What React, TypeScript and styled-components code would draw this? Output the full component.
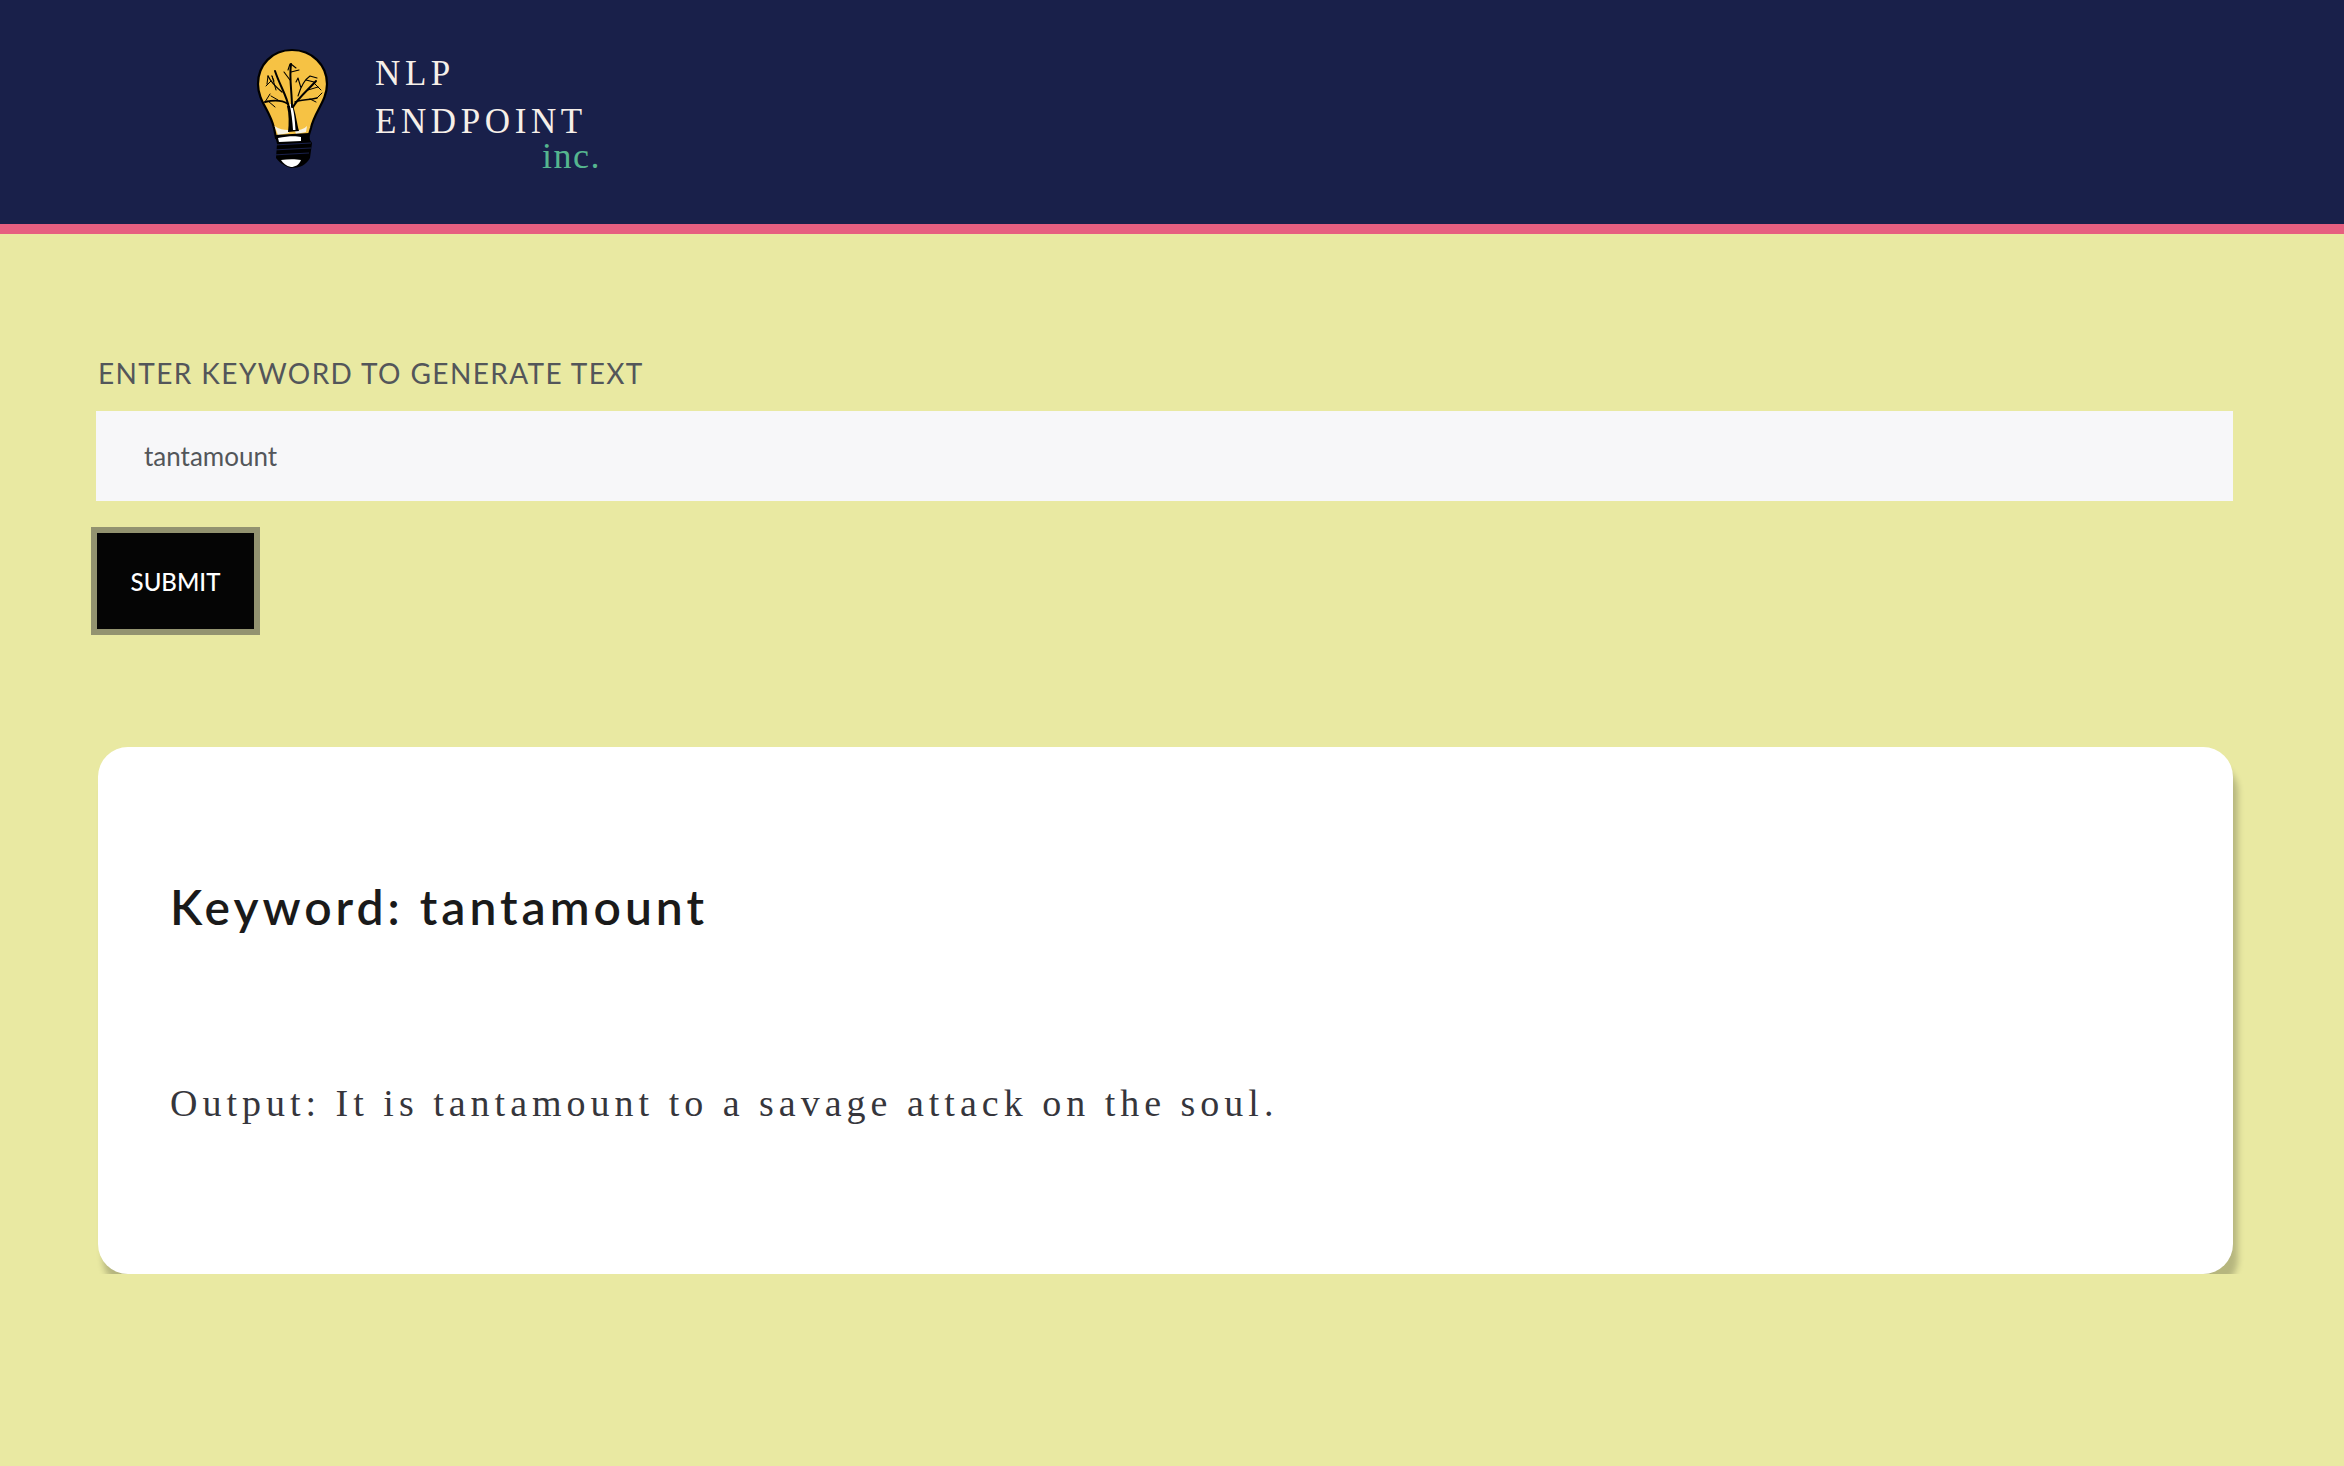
import * as React from "react";
import {FC} from "react";
import styled, {createGlobalStyle} from "styled-components";

const App: FC = () => {
    return (
        <>
            <GlobalStyle/>
            <Header>
                <BulbLogo/>
                <BrandBlock>
                    <BrandLine>NLP</BrandLine>
                    <BrandLine>ENDPOINT</BrandLine>
                    <BrandSuffix>inc.</BrandSuffix>
                </BrandBlock>
            </Header>
            <Main>
                <FieldLabel htmlFor="keyword">ENTER KEYWORD TO GENERATE TEXT</FieldLabel>
                <KeywordInput id="keyword" value="tantamount" readOnly/>
                <SubmitButton>SUBMIT</SubmitButton>
                <ResultCard>
                    <ResultHeading>Keyword: tantamount</ResultHeading>
                    <ResultText>Output: It is tantamount to a savage attack on the soul.</ResultText>
                </ResultCard>
            </Main>
        </>
    );
};

const BulbLogo: FC = () => (
    <BulbSvg viewBox="0 0 100 140" width={100} height={140}>
        <path d="M46 10C26 10 12 25 12 44C12 61 24 70 28 88L30 98L62 98L65 88C68 72 81 61 81 44C81 25 66 10 46 10Z"
              fill="#f6c244" stroke="#000" strokeWidth="2.2"/>
        <path d="M28.5 86C33 89 38 90 42 90L43 93L32 95ZM49 91C54 90 58 89 61 86L60 92L50 94Z" fill="#f7f3e4"/>
        <path d="M29 95L63 93L64 100L66 103L64 118C60 125 54 128 45 128C38 126 33 122 30 118L31 104Z" fill="#000"/>
        <path d="M32 98C42 96 50 96 55 97L55 101L33 102Z" fill="#fff"/>
        <path d="M28 105L65 103M27 110L65 108M27 115L63 113" stroke="#19204a" strokeWidth="1.1" fill="none"/>
        <path d="M35 120C42 119 50 119 55 120C53 125 49 127 45 127C40 126 37 123 35 120Z" fill="#fff"/>
        <path d="M42 92C43 84 43 74 41 66L47 66C50 74 51 84 53 91Z" fill="#000"/>
        <path d="M43.5 64C45.5 72 46.5 82 47 90L49.5 90C49 80 48 70 45.5 64Z" fill="#fff"/>
        <g stroke="#000" fill="none" strokeLinecap="round">
            <path d="M43 68C41 56 34 46 29 31" strokeWidth="2"/>
            <path d="M46 67C46 52 43 38 45 24" strokeWidth="2"/>
            <path d="M47 67C52 58 62 50 70 41" strokeWidth="2"/>
            <path d="M42 64C36 60 28 60 19 62" strokeWidth="1.8"/>
            <path d="M49 62C54 60 62 60 71 58" strokeWidth="1.5"/>
            <path d="M36 52C31 48 26 44 22 36" strokeWidth="1.3"/>
            <path d="M22 36L21 44M25 41L20 46M30 50L26 36M26 36L28 41" strokeWidth="1"/>
            <path d="M45 24L50 28M45 32L53 30M44 40L38 32M44 24L42 30" strokeWidth="1.1"/>
            <path d="M52 56C55 46 58 40 64 36M55 48L52 38M52 38L50 42M60 40L68 42M64 36L71 38" strokeWidth="1.1"/>
            <path d="M62 50L72 47M68 43L75 50M64 59L70 62M71 58L76 53" strokeWidth="1"/>
            <path d="M19 62L24 54M22 61L29 67M32 60L25 56" strokeWidth="1"/>
        </g>
    </BulbSvg>
);

export default App;


const GlobalStyle = createGlobalStyle`
  html, body {
    margin: 0;
    padding: 0;
    min-height: 100%;
    background: #e9e9a2;
  }

  * {
    box-sizing: border-box;
  }
`;

const Header = styled.header`
  display: flex;
  align-items: flex-start;
  height: 234px;
  padding: 40px 0 0 246px;
  background: #19204a;
  border-bottom: 10px solid #e65f80;
`;

const BulbSvg = styled.svg`
  flex: none;
`;

const BrandBlock = styled.div`
  display: flex;
  flex-direction: column;
  width: 226px;
  margin: 10px 0 0 29px;
  font-family: "Liberation Serif", serif;
`;

const BrandLine = styled.div`
  font-size: 35px;
  line-height: 48px;
  letter-spacing: 4.6px;
  white-space: nowrap;
  color: #f6efe8;
`;

const BrandSuffix = styled.div`
  align-self: flex-end;
  margin-top: -8px;
  font-size: 36px;
  line-height: 36px;
  letter-spacing: 1.5px;
  color: #55b58f;
`;

const Main = styled.main`
  display: flex;
  flex-direction: column;
  align-items: flex-start;
  padding: 122px 111px 0 98px;
`;

const FieldLabel = styled.label`
  font-family: Lato, sans-serif;
  font-size: 28px;
  line-height: 34px;
  letter-spacing: 1.4px;
  color: #53565a;
`;

const KeywordInput = styled.input`
  display: block;
  width: 2137px;
  height: 90px;
  margin: 21px 0 0 -2px;
  padding: 0 48px;
  border: none;
  outline: none;
  background: #f7f7f9;
  font-family: Lato, sans-serif;
  font-size: 26px;
  color: #53565a;
`;

const SubmitButton = styled.button`
  width: 169px;
  height: 108px;
  margin: 26px 0 0 -7px;
  border: 6px solid #939370;
  border-radius: 0;
  background: #050505;
  font-family: Lato, sans-serif;
  font-size: 24px;
  font-weight: 500;
  color: #fff;
`;

const ResultCard = styled.section`
  display: flex;
  flex-direction: column;
  width: 2135px;
  height: 527px;
  margin-top: 112px;
  padding: 130px 72px 0;
  border-radius: 30px;
  background: #fff;
  box-shadow: 5px 15px 6px rgba(0, 0, 0, 0.22);
`;

const ResultHeading = styled.h2`
  margin: 0;
  font-family: Lato, sans-serif;
  font-size: 48px;
  line-height: 60px;
  font-weight: 600;
  letter-spacing: 4px;
  color: #1a1a1a;
`;

const ResultText = styled.p`
  margin: 144px 0 0;
  font-family: "Liberation Serif", serif;
  font-size: 38px;
  line-height: 44px;
  letter-spacing: 5px;
  color: #36363c;
`;
